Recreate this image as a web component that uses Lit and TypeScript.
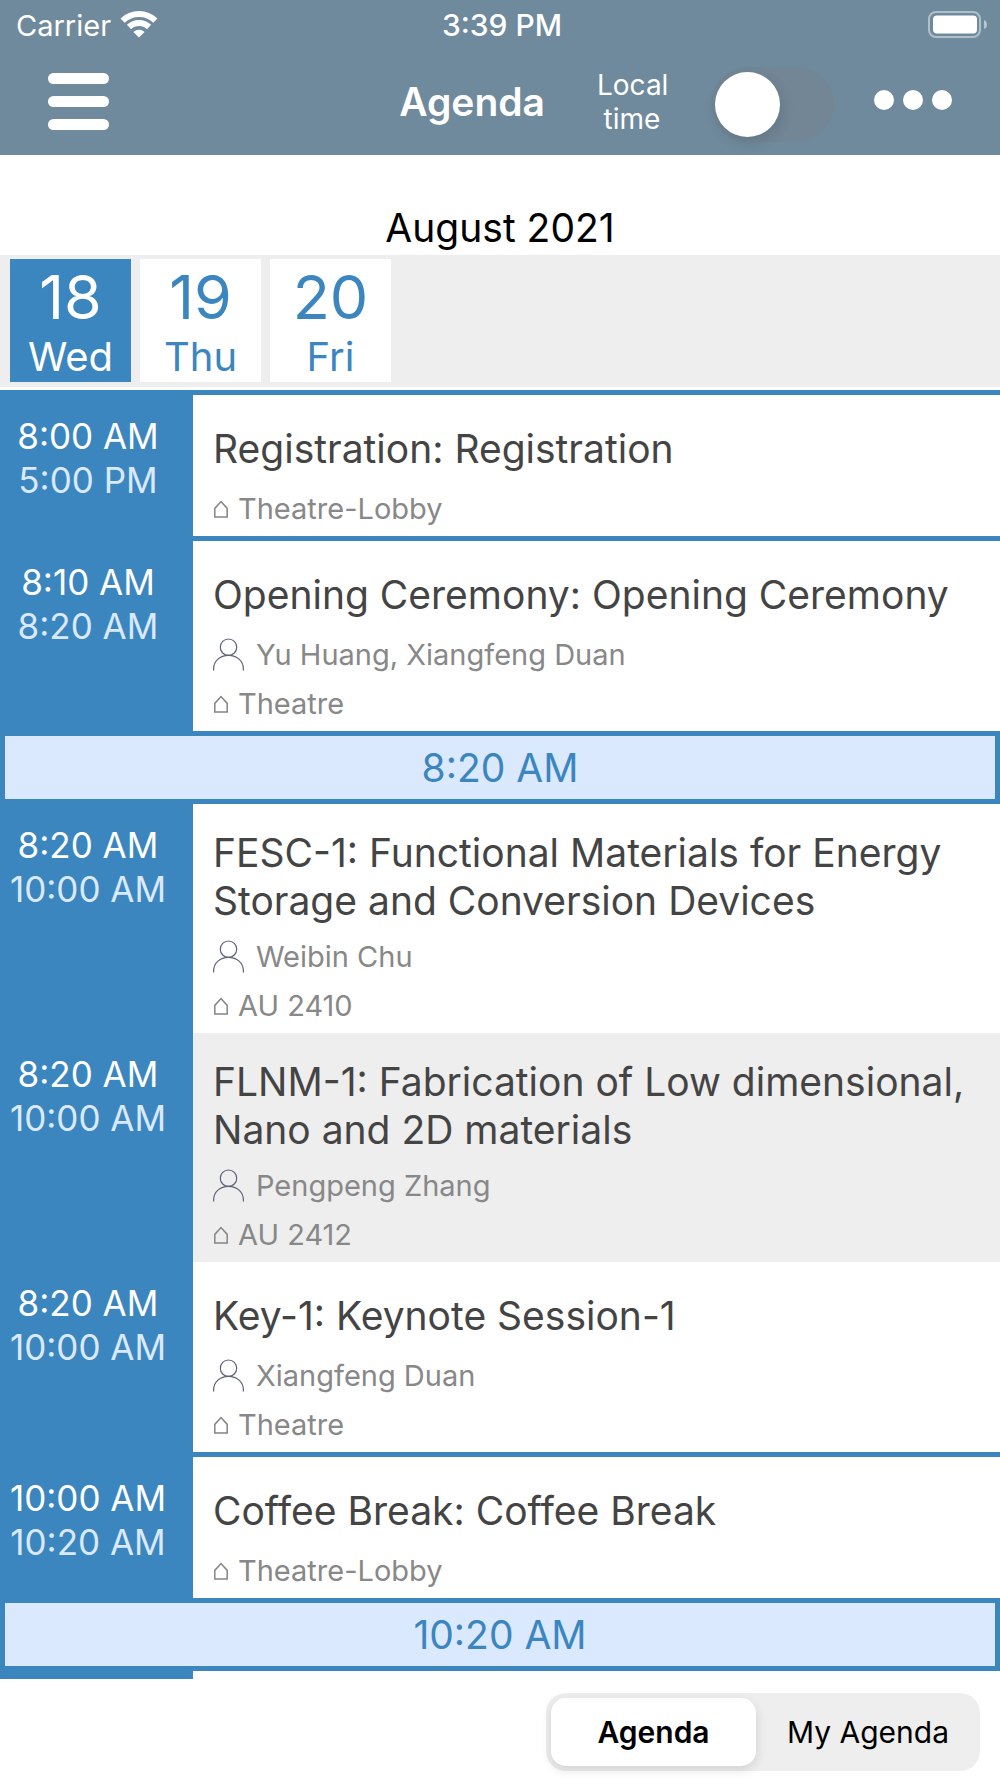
import { LitElement, html, css, svg, nothing } from "lit";
import { customElement, state } from "lit/decorators.js";
import { classMap } from "lit/directives/class-map.js";

interface Session {
  start: string;
  end: string;
  title: string;
  speakers?: string;
  place: string;
  shaded?: boolean;
}

interface Slot {
  heading?: string;
  sessions: Session[];
}

const DAYS = [
  { date: 18, name: "Wed" },
  { date: 19, name: "Thu" },
  { date: 20, name: "Fri" },
];

const SLOTS: Slot[] = [
  {
    sessions: [
      { start: "8:00 AM", end: "5:00 PM", title: "Registration: Registration", place: "Theatre-Lobby" },
    ],
  },
  {
    sessions: [
      {
        start: "8:10 AM",
        end: "8:20 AM",
        title: "Opening Ceremony: Opening Ceremony",
        speakers: "Yu Huang, Xiangfeng Duan",
        place: "Theatre",
      },
    ],
  },
  {
    heading: "8:20 AM",
    sessions: [
      {
        start: "8:20 AM",
        end: "10:00 AM",
        title: "FESC-1: Functional Materials for Energy Storage and Conversion Devices",
        speakers: "Weibin Chu",
        place: "AU 2410",
      },
      {
        start: "8:20 AM",
        end: "10:00 AM",
        title: "FLNM-1: Fabrication of Low dimensional, Nano and 2D materials",
        speakers: "Pengpeng Zhang",
        place: "AU 2412",
        shaded: true,
      },
      {
        start: "8:20 AM",
        end: "10:00 AM",
        title: "Key-1: Keynote Session-1",
        speakers: "Xiangfeng Duan",
        place: "Theatre",
      },
    ],
  },
  {
    sessions: [
      { start: "10:00 AM", end: "10:20 AM", title: "Coffee Break: Coffee Break", place: "Theatre-Lobby" },
    ],
  },
  { heading: "10:20 AM", sessions: [] },
];

const wifiIcon = svg`<svg class="wifi" viewBox="0 0 38 28" width="38" height="28" aria-hidden="true">
  <g fill="none" stroke="#fff" stroke-width="6">
    <path d="M2.6 10.6 A23.5 23.5 0 0 1 35.4 10.6"/>
    <path d="M9 17 A14.4 14.4 0 0 1 29 17"/>
  </g>
  <path fill="#fff" d="M19 27.6 L13.4 22 A8 8 0 0 1 24.6 22 Z"/>
</svg>`;

const batteryIcon = svg`<svg class="battery" viewBox="0 0 60 28" width="60" height="28" aria-hidden="true">
  <rect x="1" y="1" width="51" height="25" rx="7" fill="none" stroke="#fff" stroke-opacity=".45" stroke-width="2"/>
  <rect x="5" y="4.500" width="44" height="18" rx="4" fill="#fff"/>
  <path d="M56 9 Q59 10 59 13.500 Q59 17 56 18 Z" fill="#fff" fill-opacity=".5"/>
</svg>`;

const personIcon = svg`<svg viewBox="0 0 31 33" width="31" height="33" aria-hidden="true">
  <g fill="none" stroke="#5d6179" stroke-width="1.200">
    <circle cx="15.500" cy="9.200" r="8.200"/>
    <path d="M.6 32.500 V31 C.6 22.800 7.200 17.400 15.500 17.400 S30.400 22.800 30.400 31 V32.500"/>
  </g>
</svg>`;

const homeIcon = svg`<svg viewBox="0 0 16 18" width="16" height="18" aria-hidden="true">
  <path d="M1.800 16.900 V8.400 L8 1.500 L14.200 8.400 V16.900 Z" fill="none" stroke="#858585" stroke-width="1.500"/>
</svg>`;

@customElement("session-row")
export class SessionRow extends LitElement {
  static properties = { session: { attribute: false } };
  declare session: Session;

  static styles = css`
    :host {
      display: block;
    }
    .row {
      display: grid;
      grid-template-columns: 193px 1fr;
    }
    .times {
      box-sizing: border-box;
      padding: 19px 17px 0 0;
      background: #3b86bf;
      color: #fff;
      font-size: 35px;
      line-height: 44px;
      text-align: center;
      white-space: nowrap;
    }
    .end {
      color: #dbe9fe;
    }
    .body {
      padding: 25px 20px 3px;
      background: #fff;
    }
    .shaded {
      background: #eee;
    }
    h2 {
      display: flex;
      align-items: center;
      min-height: 57px;
      margin: 0 0 7px;
      color: #444;
      font-size: 39px;
      font-weight: 400;
      line-height: 48px;
    }
    p {
      display: flex;
      align-items: center;
      margin: 0;
      color: #888;
      font-size: 29px;
      line-height: 49px;
    }
    .speaker {
      gap: 12px;
    }
    .place {
      gap: 9px;
    }
  `;

  render() {
    const s = this.session;
    return html`<article class="row">
      <div class="times">
        <div>${s.start}</div>
        <div class="end">${s.end}</div>
      </div>
      <div class=${classMap({ body: true, shaded: !!s.shaded })}>
        <h2>${s.title}</h2>
        ${s.speakers ? html`<p class="speaker">${personIcon}<span>${s.speakers}</span></p>` : nothing}
        <p class="place">${homeIcon}<span>${s.place}</span></p>
      </div>
    </article>`;
  }
}

@customElement("app-root")
export class AppRoot extends LitElement {
  @state() private day = 18;
  @state() private tab = "Agenda";

  static styles = css`
    :host {
      display: flex;
      flex-direction: column;
      min-height: 100vh;
      background: #fff;
      color: #000;
      font-family: Inter, "Liberation Sans", sans-serif;
    }
    button {
      padding: 0;
      border: 0;
      background: none;
      color: inherit;
      font: inherit;
      cursor: pointer;
    }
    header {
      background: #6f8a9c;
      color: #fff;
    }
    .status {
      display: grid;
      grid-template-columns: 1fr auto 1fr;
      align-items: center;
      height: 50px;
      padding: 0 12px 0 16px;
      font-size: 29px;
    }
    .carrier {
      display: flex;
      align-items: center;
      gap: 9px;
    }
    .clock {
      font-size: 30px;
      font-weight: 500;
    }
    .wifi {
      margin-bottom: 3px;
    }
    .battery {
      justify-self: end;
    }
    .nav {
      display: flex;
      align-items: center;
      box-sizing: border-box;
      height: 105px;
      padding: 0 48px 2px;
    }
    .menu {
      display: grid;
      gap: 12px;
      width: 61px;
      margin-right: auto;
    }
    .bar {
      height: 11px;
      border-radius: 6px;
      background: #fff;
    }
    h1 {
      margin: 0 52px 0 0;
      font-size: 39px;
      font-weight: 600;
    }
    .local {
      width: 70px;
      margin-right: 44px;
      font-size: 28px;
      line-height: 34px;
      text-align: center;
    }
    .switch {
      appearance: none;
      display: flex;
      align-items: center;
      box-sizing: border-box;
      width: 123px;
      height: 75px;
      margin: 6px 40px 0 0;
      padding: 4px;
      border-radius: 38px;
      background: #728696;
      cursor: pointer;
    }
    .switch::before {
      content: "";
      width: 65px;
      height: 65px;
      border-radius: 50%;
      background: #fff;
      box-shadow: 2px 5px 14px rgba(0, 0, 0, 0.12);
    }
    .switch:checked {
      justify-content: flex-end;
      background: #3b86bf;
    }
    .more {
      display: flex;
      gap: 9px;
      padding-bottom: 4px;
    }
    .dot {
      width: 20px;
      height: 20px;
      border-radius: 50%;
      background: #fff;
    }
    .month {
      padding: 47px 0 1px;
      font-size: 39px;
      line-height: 52px;
      text-align: center;
    }
    .days {
      display: flex;
      gap: 9px;
      padding: 4px 10px 5px;
      margin-bottom: 3px;
      background: #eee;
    }
    .day {
      display: grid;
      width: 121px;
      padding: 2px 0 1px;
      background: #fff;
      color: #3b86bf;
      font-size: 40px;
      line-height: 48px;
    }
    .date {
      font-size: 61px;
      line-height: 72px;
    }
    .current {
      background: #3b86bf;
      color: #fff;
    }
    .slot {
      border-top: 5px solid #3b86bf;
    }
    .heading {
      margin: 0;
      border: solid #3b86bf;
      border-width: 0 5px 5px;
      background: #dbe9fe;
      color: #3b86bf;
      font-size: 39px;
      font-weight: 400;
      line-height: 63px;
      text-align: center;
    }
    main {
      display: flex;
      flex: 1;
      flex-direction: column;
    }
    .rail {
      flex: 1;
      width: 193px;
      background: #3b86bf;
    }
    footer {
      display: flex;
      justify-content: flex-end;
      padding: 14px 20px 7px;
    }
    .tabs {
      display: grid;
      grid-template-columns: 205px 214px;
      gap: 5px;
      padding: 5px;
      border-radius: 20px;
      background: #eee;
      font-size: 30px;
      line-height: 68px;
    }
    .tab {
      border-radius: 15px;
    }
    .active {
      background: #fff;
      font-weight: 600;
      box-shadow: 0 4px 12px rgba(0, 0, 0, 0.12);
    }
  `;

  private renderSlot(slot: Slot) {
    return html`<section class="slot">
      ${slot.heading ? html`<h2 class="heading">${slot.heading}</h2>` : nothing}
      ${slot.sessions.map((s) => html`<session-row .session=${s}></session-row>`)}
    </section>`;
  }

  render() {
    return html`
      <header>
        <div class="status">
          <div class="carrier"><span>Carrier</span>${wifiIcon}</div>
          <div class="clock">3:39 PM</div>
          ${batteryIcon}
        </div>
        <nav class="nav">
          <button class="menu" aria-label="Menu">
            <span class="bar"></span><span class="bar"></span><span class="bar"></span>
          </button>
          <h1>Agenda</h1>
          <label class="local" for="local-time">Local time</label>
          <input class="switch" id="local-time" type="checkbox" role="switch" />
          <button class="more" aria-label="More">
            <span class="dot"></span><span class="dot"></span><span class="dot"></span>
          </button>
        </nav>
      </header>
      <div class="month">August 2021</div>
      <div class="days">
        ${DAYS.map(
          (d) => html`<button
            class=${classMap({ day: true, current: d.date === this.day })}
            aria-pressed=${d.date === this.day}
            @click=${() => (this.day = d.date)}
          >
            <span class="date">${d.date}</span><span>${d.name}</span>
          </button>`
        )}
      </div>
      <main>
        ${SLOTS.map((slot) => this.renderSlot(slot))}
        <div class="rail"></div>
      </main>
      <footer>
        <div class="tabs">
          ${["Agenda", "My Agenda"].map(
            (name) => html`<button
              class=${classMap({ tab: true, active: name === this.tab })}
              aria-pressed=${name === this.tab}
              @click=${() => (this.tab = name)}
            >
              ${name}
            </button>`
          )}
        </div>
      </footer>
    `;
  }
}
